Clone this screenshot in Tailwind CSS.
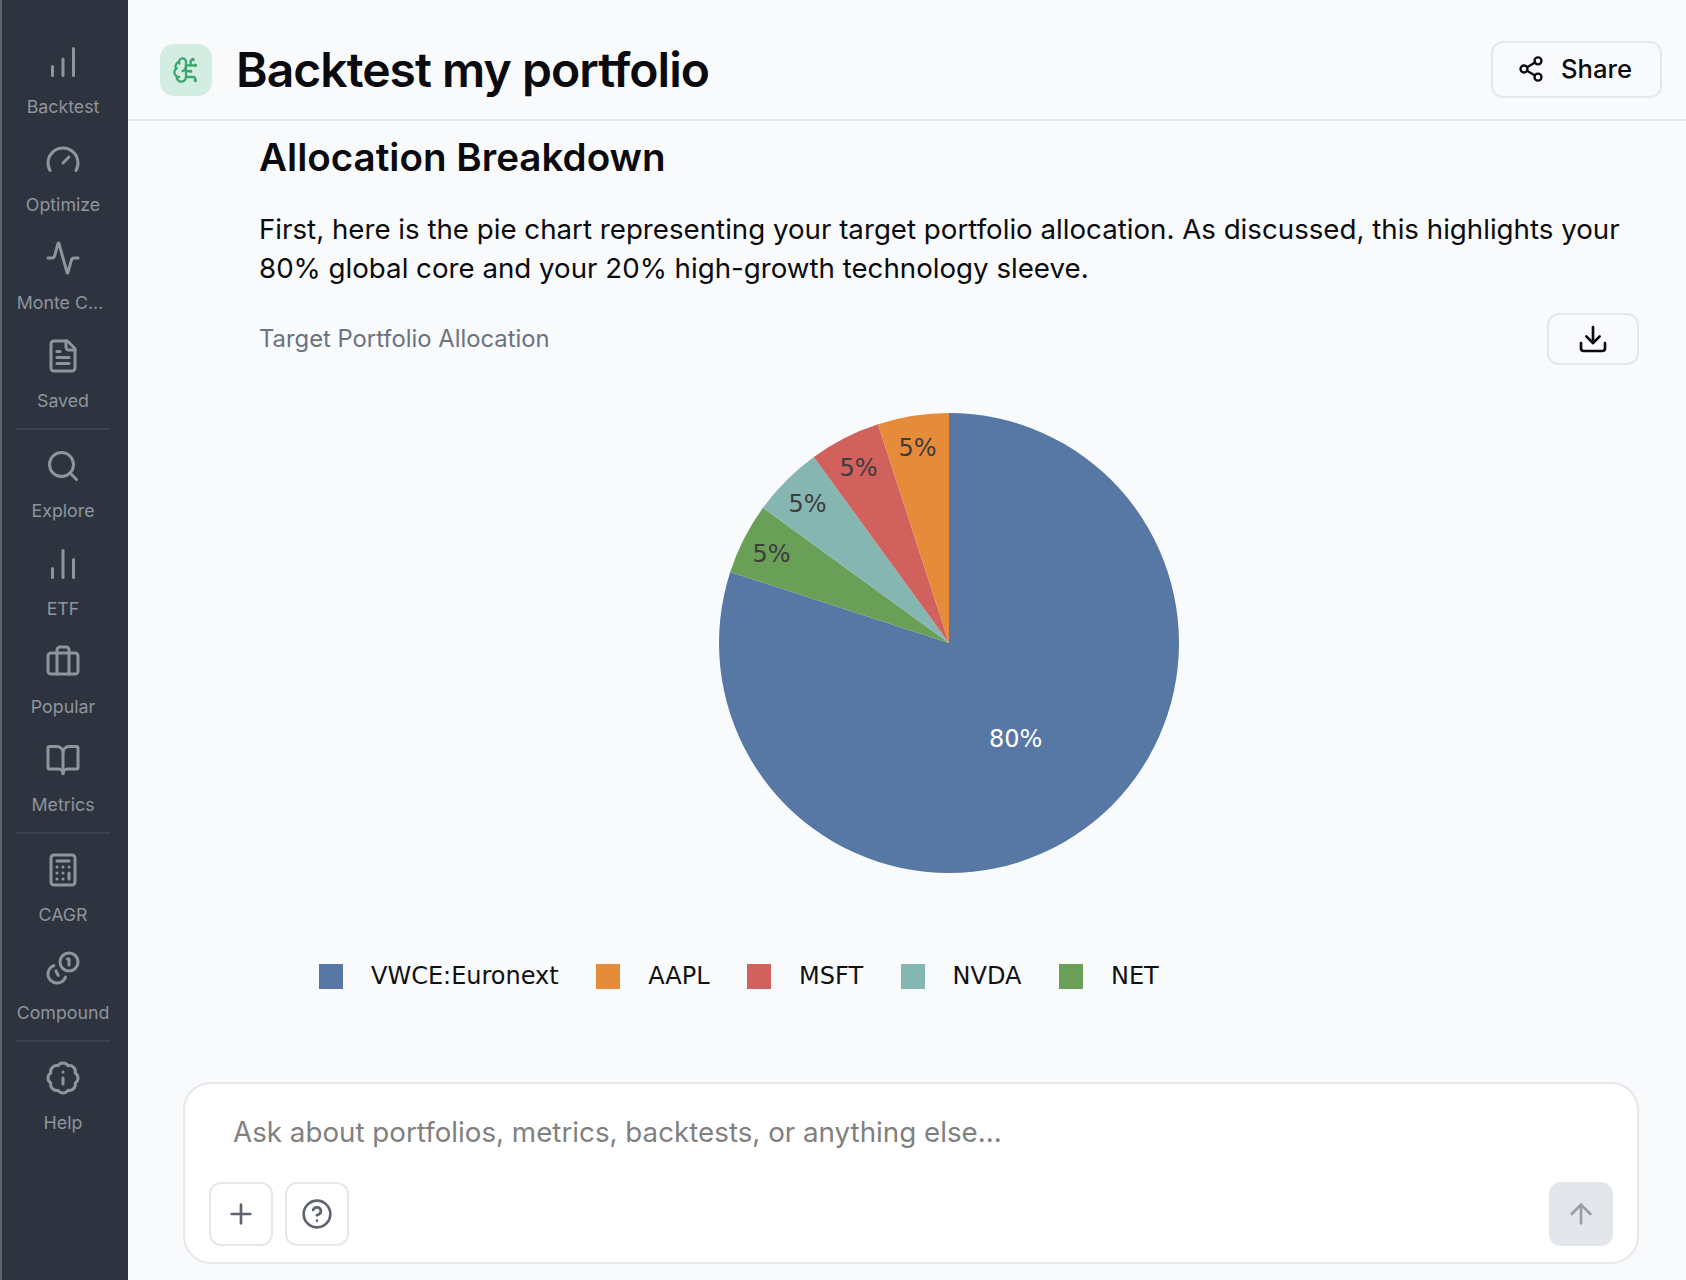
<!DOCTYPE html>
<html>
  <head>
    <meta charset="UTF-8">
    <meta name="viewport" content="width=device-width, initial-scale=1.0">
    <title>Backtest my portfolio</title>
    <script src="https://cdn.jsdelivr.net/npm/@tailwindcss/browser@4"></script>
  </head>
  <body class="bg-[#f9fafc] text-[#0b0b0f] font-['Inter',sans-serif] overflow-hidden">
    <div class="flex h-[1280px] w-[1686px]">

      <!-- Sidebar -->
      <nav class="w-[128px] shrink-0 bg-[#2d3440] border-l-2 border-[#5c636c] pr-[4px] pt-[42px] text-[#8f949d] text-[17.8px] leading-[28px]">
        <div class="flex flex-col gap-[19px]">
          <div class="flex flex-col items-center">
            <svg class="w-9 h-9 mt-[2px] mb-[13px]" fill="none" viewBox="0 0 24 24" stroke="currentColor" stroke-width="2" stroke-linecap="round" stroke-linejoin="round"><path d="M5 21v-6"/><path d="M12 21V10"/><path d="M19 21V3"/></svg>
            <span>Backtest</span>
          </div>
          <div class="flex flex-col items-center">
            <svg class="w-9 h-9 mt-[2px] mb-[13px]" fill="none" viewBox="0 0 24 24" stroke="currentColor" stroke-width="2" stroke-linecap="round" stroke-linejoin="round"><path d="m12 14 4-4"/><path d="M3.34 19a10 10 0 1 1 17.32 0"/></svg>
            <span>Optimize</span>
          </div>
          <div class="flex flex-col items-center">
            <svg class="w-9 h-9 mt-[2px] mb-[13px]" fill="none" viewBox="0 0 24 24" stroke="currentColor" stroke-width="2" stroke-linecap="round" stroke-linejoin="round"><path d="M22 12h-2.48a2 2 0 0 0-1.93 1.46l-2.35 8.36a.25.25 0 0 1-.48 0L9.24 2.18a.25.25 0 0 0-.48 0l-2.35 8.36A2 2 0 0 1 4.49 12H2"/></svg>
            <span class="mr-[6px]">Monte C...</span>
          </div>
          <div class="flex flex-col items-center">
            <svg class="w-9 h-9 mt-[2px] mb-[13px]" fill="none" viewBox="0 0 24 24" stroke="currentColor" stroke-width="2" stroke-linecap="round" stroke-linejoin="round"><path d="M15 2H6a2 2 0 0 0-2 2v16a2 2 0 0 0 2 2h12a2 2 0 0 0 2-2V7Z"/><path d="M14 2v4a2 2 0 0 0 2 2h4"/><path d="M10 9H8"/><path d="M16 13H8"/><path d="M16 17H8"/></svg>
            <span>Saved</span>
          </div>
        </div>

        <div class="h-[2px] bg-[#3b4350] mx-[14px] mt-[13px] mb-[16px]"></div>

        <div class="flex flex-col gap-[19px]">
          <div class="flex flex-col items-center">
            <svg class="w-9 h-9 mt-[2px] mb-[13px]" fill="none" viewBox="0 0 24 24" stroke="currentColor" stroke-width="2" stroke-linecap="round" stroke-linejoin="round"><circle cx="11" cy="11" r="8"/><path d="m21 21-4.3-4.3"/></svg>
            <span>Explore</span>
          </div>
          <div class="flex flex-col items-center">
            <svg class="w-9 h-9 mt-[2px] mb-[13px]" fill="none" viewBox="0 0 24 24" stroke="currentColor" stroke-width="2" stroke-linecap="round" stroke-linejoin="round"><path d="M5 21v-6"/><path d="M12 21V3"/><path d="M19 21V9"/></svg>
            <span>ETF</span>
          </div>
          <div class="flex flex-col items-center">
            <svg class="w-9 h-9 mt-[2px] mb-[13px]" fill="none" viewBox="0 0 24 24" stroke="currentColor" stroke-width="2" stroke-linecap="round" stroke-linejoin="round"><path d="M16 20V4a2 2 0 0 0-2-2h-4a2 2 0 0 0-2 2v16"/><rect width="20" height="14" x="2" y="6" rx="2"/></svg>
            <span>Popular</span>
          </div>
          <div class="flex flex-col items-center">
            <svg class="w-9 h-9 mt-[2px] mb-[13px]" fill="none" viewBox="0 0 24 24" stroke="currentColor" stroke-width="2" stroke-linecap="round" stroke-linejoin="round"><path d="M12 7v14"/><path d="M3 18a1 1 0 0 1-1-1V4a1 1 0 0 1 1-1h5a4 4 0 0 1 4 4 4 4 0 0 1 4-4h5a1 1 0 0 1 1 1v13a1 1 0 0 1-1 1h-6a3 3 0 0 0-3 3 3 3 0 0 0-3-3z"/></svg>
            <span>Metrics</span>
          </div>
        </div>

        <div class="h-[2px] bg-[#3b4350] mx-[14px] mt-[13px] mb-[16px]"></div>

        <div class="flex flex-col gap-[19px]">
          <div class="flex flex-col items-center">
            <svg class="w-9 h-9 mt-[2px] mb-[13px]" fill="none" viewBox="0 0 24 24" stroke="currentColor" stroke-width="2" stroke-linecap="round" stroke-linejoin="round"><rect width="16" height="20" x="4" y="2" rx="2"/><line x1="8" x2="16" y1="6" y2="6"/><line x1="16" x2="16" y1="14" y2="18"/><path d="M16 10h.01"/><path d="M12 10h.01"/><path d="M8 10h.01"/><path d="M12 14h.01"/><path d="M8 14h.01"/><path d="M12 18h.01"/><path d="M8 18h.01"/></svg>
            <span>CAGR</span>
          </div>
          <div class="flex flex-col items-center">
            <svg class="w-9 h-9 mt-[2px] mb-[13px]" fill="none" viewBox="0 0 24 24" stroke="currentColor" stroke-width="2" stroke-linecap="round" stroke-linejoin="round"><circle cx="16" cy="8" r="6"/><path d="M5.91 10.37A6 6 0 1 0 13.66 18"/><path d="M15 6h1v4"/><path d="M7.3 13.9l1.5 3"/></svg>
            <span>Compound</span>
          </div>
        </div>

        <div class="h-[2px] bg-[#3b4350] mx-[14px] mt-[13px] mb-[16px]"></div>

        <div class="flex flex-col items-center">
          <svg class="w-9 h-9 mt-[2px] mb-[13px]" fill="none" viewBox="0 0 24 24" stroke="currentColor" stroke-width="2" stroke-linecap="round" stroke-linejoin="round"><path d="M3.85 8.62a4 4 0 0 1 4.78-4.77 4 4 0 0 1 6.74 0 4 4 0 0 1 4.78 4.78 4 4 0 0 1 0 6.74 4 4 0 0 1-4.77 4.78 4 4 0 0 1-6.75 0 4 4 0 0 1-4.78-4.77 4 4 0 0 1 0-6.76Z"/><line x1="12" x2="12" y1="16" y2="12"/><line x1="12" x2="12.01" y1="8" y2="8"/></svg>
          <span>Help</span>
        </div>
      </nav>

      <!-- Main -->
      <main class="flex-1 flex flex-col min-w-0">
        <header class="h-[121px] shrink-0 flex items-center border-b-2 border-[#e5e7eb] pt-[21px] pl-[32px] pr-[24px]">
          <div class="w-[52px] h-[52px] rounded-[14px] bg-[#d4ede2] flex items-center justify-center text-[#3aa76d] mr-[24px]">
            <svg class="w-7 h-7" fill="none" viewBox="0 0 24 24" stroke="currentColor" stroke-width="2" stroke-linecap="round" stroke-linejoin="round"><path d="M12 5a3 3 0 1 0-5.997.125 4 4 0 0 0-2.526 5.77 4 4 0 0 0 .556 6.588A4 4 0 1 0 12 18Z"/><path d="M9 13a4.5 4.5 0 0 0 3-4"/><path d="M6.003 5.125A3 3 0 0 0 6.401 6.5"/><path d="M3.477 10.896a4 4 0 0 1 .585-.396"/><path d="M6 18a4 4 0 0 1-1.967-.516"/><path d="M12 13h4"/><path d="M12 18h6a2 2 0 0 1 2 2v1"/><path d="M12 8h8"/><path d="M16 8V5a2 2 0 0 1 2-2"/><circle cx="16" cy="13" r=".5"/><circle cx="18" cy="3" r=".5"/><circle cx="20" cy="21" r=".5"/><circle cx="20" cy="8" r=".5"/></svg>
          </div>
          <h1 class="text-[48px] leading-[56px] font-semibold tracking-[-0.02em]">Backtest my portfolio</h1>
          <button class="ml-auto mb-[2px] w-[171px] h-[57px] pr-[4px] rounded-xl border-2 border-[#e5e7eb] flex items-center justify-center gap-[16px] text-[25.6px] font-medium">
            <svg class="w-7 h-7" fill="none" viewBox="0 0 24 24" stroke="currentColor" stroke-width="2" stroke-linecap="round" stroke-linejoin="round"><circle cx="18" cy="5" r="3"/><circle cx="6" cy="12" r="3"/><circle cx="18" cy="19" r="3"/><line x1="8.59" x2="15.42" y1="13.51" y2="17.49"/><line x1="15.41" x2="8.59" y1="6.51" y2="10.49"/></svg>
            Share
          </button>
        </header>

        <section class="flex-1 min-h-0 pl-[131px] pr-[47px] pt-[12px]">
          <h2 class="text-[38.6px] leading-[48px] font-semibold">Allocation Breakdown</h2>
          <p class="mt-[29px] text-[27.7px] leading-[39px]">First, here is the pie chart representing your target portfolio allocation. As discussed, this highlights your 80% global core and your 20% high-growth technology sleeve.</p>

          <div class="mt-[25px] flex items-center justify-between">
            <span class="text-[23.8px] text-[#6b7280]">Target Portfolio Allocation</span>
            <button class="w-[92px] h-[52px] rounded-xl border-2 border-[#e5e7eb] flex items-center justify-center">
              <svg class="w-8 h-8" fill="none" viewBox="0 0 24 24" stroke="currentColor" stroke-width="2" stroke-linecap="round" stroke-linejoin="round"><path d="M21 15v4a2 2 0 0 1-2 2H5a2 2 0 0 1-2-2v-4"/><polyline points="7 10 12 15 17 10"/><line x1="12" x2="12" y1="15" y2="3"/></svg>
            </button>
          </div>

          <svg class="mt-[28px] ml-[440px] block w-[500px] h-[500px] font-['DejaVu_Sans',sans-serif] text-[24px]" viewBox="0 0 500 500">
            <path fill="#5778a4" d="M250 250 L250 20 A230 230 0 1 1 31.26 178.93 Z"/>
            <path fill="#6a9f58" d="M250 250 L31.26 178.93 A230 230 0 0 1 63.93 114.81 Z"/>
            <path fill="#85b6b2" d="M250 250 L63.93 114.81 A230 230 0 0 1 114.81 63.93 Z"/>
            <path fill="#d1615d" d="M250 250 L114.81 63.93 A230 230 0 0 1 178.93 31.26 Z"/>
            <path fill="#e58b3a" d="M250 250 L178.93 31.26 A230 230 0 0 1 250 20 Z"/>
            <text x="218.5" y="55" text-anchor="middle" dominant-baseline="central" fill="#3d3d3d">5%</text>
            <text x="159.5" y="75" text-anchor="middle" dominant-baseline="central" fill="#3d3d3d">5%</text>
            <text x="108.5" y="111" text-anchor="middle" dominant-baseline="central" fill="#3d3d3d">5%</text>
            <text x="72.5" y="161" text-anchor="middle" dominant-baseline="central" fill="#3d3d3d">5%</text>
            <text x="316.7" y="345.7" text-anchor="middle" dominant-baseline="central" fill="#ffffff">80%</text>
          </svg>

          <div class="mt-[71px] ml-[60px] flex items-center font-['DejaVu_Sans',sans-serif] text-[24px] leading-[25px] text-[#111] gap-[37.5px]">
            <div class="flex items-center gap-[28px]"><span class="w-[24px] h-[25px] bg-[#5778a4]"></span>VWCE:Euronext</div>
            <div class="flex items-center gap-[28px]"><span class="w-[24px] h-[25px] bg-[#e58b3a]"></span>AAPL</div>
            <div class="flex items-center gap-[28px]"><span class="w-[24px] h-[25px] bg-[#d1615d]"></span>MSFT</div>
            <div class="flex items-center gap-[28px]"><span class="w-[24px] h-[25px] bg-[#85b6b2]"></span>NVDA</div>
            <div class="flex items-center gap-[28px]"><span class="w-[24px] h-[25px] bg-[#6a9f58]"></span>NET</div>
          </div>
        </section>

        <!-- Chat input -->
        <div class="shrink-0 ml-[55px] mr-[47px] mb-[16px] h-[182px] rounded-[28px] border-2 border-[#e5e7eb] bg-white flex flex-col">
          <div class="pl-[48px] pt-[28px] text-[27.75px] leading-[40px] text-[#808080]">Ask about portfolios, metrics, backtests, or anything else...</div>
          <div class="mt-auto mb-[16px] mx-[24px] flex items-center gap-[12px]">
            <button class="w-[64px] h-[64px] rounded-xl border-2 border-[#e5e7eb] flex items-center justify-center text-[#5f6470]">
              <svg class="w-8 h-8" fill="none" viewBox="0 0 24 24" stroke="currentColor" stroke-width="2" stroke-linecap="round" stroke-linejoin="round"><path d="M5 12h14"/><path d="M12 5v14"/></svg>
            </button>
            <button class="w-[64px] h-[64px] rounded-xl border-2 border-[#e5e7eb] flex items-center justify-center text-[#5f6470]">
              <svg class="w-8 h-8" fill="none" viewBox="0 0 24 24" stroke="currentColor" stroke-width="2" stroke-linecap="round" stroke-linejoin="round"><circle cx="12" cy="12" r="10"/><path d="M9.09 9a3 3 0 0 1 5.83 1c0 2-3 3-3 3"/><path d="M12 17h.01"/></svg>
            </button>
            <button class="ml-auto w-[64px] h-[64px] rounded-xl bg-[#e3e6ea] flex items-center justify-center text-[#9a9da3]">
              <svg class="w-8 h-8" fill="none" viewBox="0 0 24 24" stroke="currentColor" stroke-width="2" stroke-linecap="round" stroke-linejoin="round"><path d="m5 12 7-7 7 7"/><path d="M12 19V5"/></svg>
            </button>
          </div>
        </div>
      </main>
    </div>
  </body>
</html>
